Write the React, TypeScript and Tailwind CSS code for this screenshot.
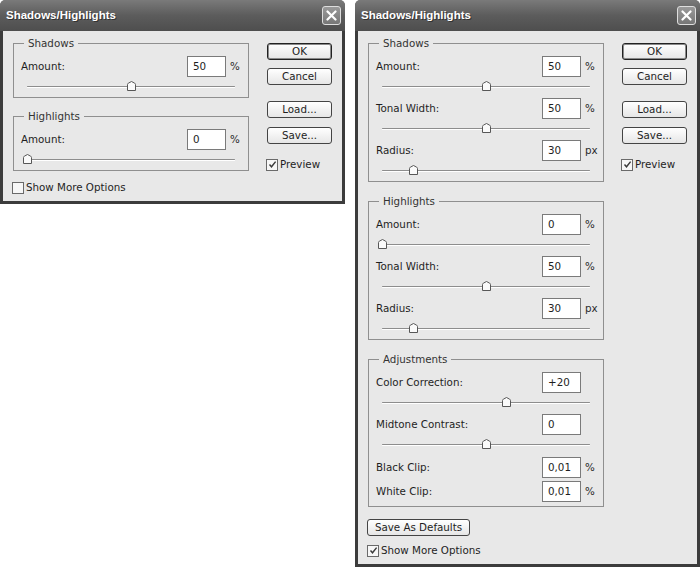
import React from 'react';

type RowDef = {
  label: string;
  value: string;
  unit?: string;
  slider?: number;
  gap?: string;
};

const CheckBox: React.FC<{ checked?: boolean }> = ({ checked }) => (
  <span className="flex h-[12px] w-[12px] shrink-0 items-center justify-center border border-[#6a6a6a] bg-[#f7f7f7]">
    {checked && (
      <svg width="9" height="9" viewBox="0 0 9 9">
        <path d="M1.5 4.5 L3.5 6.8 L7.6 1.6" fill="none" stroke="#3a3a3a" strokeWidth="1.4" />
      </svg>
    )}
  </span>
);

const Slider: React.FC<{ pos: number }> = ({ pos }) => (
  <div className="relative mx-[13px] mt-[2px] flex h-[14px] items-center">
    <div className="h-px w-full rounded-full bg-[#8d8d8d] shadow-[0_1px_0_#ffffff]" />
    <svg
      className="absolute top-[2px]"
      style={{ left: `calc(${pos}% - 4.5px)` }}
      width="9"
      height="10"
      viewBox="0 0 9 10"
    >
      <path d="M0.5 9.5 V3.6 Q0.5 2.8 1.3 2.2 L4.5 0.5 L7.7 2.2 Q8.5 2.8 8.5 3.6 V9.5 Z" fill="#fafafa" stroke="#575757" />
    </svg>
  </div>
);

const Row: React.FC<{ row: RowDef; first?: boolean }> = ({ row, first }) => (
  <div>
    <div className={`flex h-[21px] items-center pl-[7px] ${first ? 'mt-[6px]' : row.gap ?? 'mt-[5px]'}`}>
      <span className="flex-1 text-[#1e1e1e]">{row.label}</span>
      <div className="flex h-[21px] w-[39px] items-center border border-[#7a7a7a] bg-white pl-[5px] text-[#1e1e1e]">
        {row.value}
      </div>
      <span className="w-[22px] pl-[4px] text-[#2a2a2a]">{row.unit}</span>
    </div>
    {row.slider !== undefined && <Slider pos={row.slider} />}
  </div>
);

const Group: React.FC<{ title: string; rows: RowDef[]; className?: string }> = ({ title, rows, className }) => (
  <fieldset className={`w-[236px] border border-[#8f8f8f] pb-[4px] ${className ?? ''}`}>
    <legend className="ml-[10px] px-[4px] leading-[14px] text-[#333]">{title}</legend>
    {rows.map((r, i) => (
      <Row key={r.label} row={r} first={i === 0} />
    ))}
  </fieldset>
);

const Btn: React.FC<{ children: React.ReactNode; primary?: boolean; className?: string }> = ({ children, primary, className }) => (
  <button
    className={`flex h-[17px] w-[65px] items-center justify-center rounded-[3px] border bg-linear-to-b from-white to-[#e6e6e6] leading-none text-[#1e1e1e] ${
      primary ? 'border-[#222] shadow-[inset_0_0_0_1px_#8a8a8a]' : 'border-[#444]'
    } ${className ?? ''}`}
  >
    {children}
  </button>
);

const TitleBar: React.FC = () => (
  <div className="flex h-[31px] items-center justify-between rounded-t-[5px] bg-linear-to-b from-[#7a7a7a] via-[#5c5c5c] to-[#4e4e4e] pl-[6px] pr-[4px]">
    <span className="font-['Liberation_Sans',Arial,sans-serif] text-[11.5px] font-bold text-white [text-shadow:1px_1px_0_#333]">
      Shadows/Highlights
    </span>
    <div className="flex h-[19px] w-[19px] items-center justify-center rounded-[3px] border border-[#dedede] bg-linear-to-b from-[#9a9a9a] to-[#777]">
      <svg width="11" height="11" viewBox="0 0 11 11">
        <path d="M1.5 1.5 L9.5 9.5 M9.5 1.5 L1.5 9.5" stroke="#fff" strokeWidth="2.2" strokeLinecap="round" />
      </svg>
    </div>
  </div>
);

const ButtonColumn: React.FC = () => (
  <div className="ml-[18px] flex flex-col pt-[7px]">
    <Btn primary>OK</Btn>
    <Btn className="mt-[8px]">Cancel</Btn>
    <Btn className="mt-[16px]">Load...</Btn>
    <Btn className="mt-[9px]">Save...</Btn>
    <div className="-ml-px mt-[13px] flex items-center gap-[2px] text-[#1e1e1e]">
      <CheckBox checked />
      <span>Preview</span>
    </div>
  </div>
);

const Dialog: React.FC<{ children: React.ReactNode; className?: string }> = ({ children, className }) => (
  <div className={`flex w-[345px] flex-col rounded-t-[6px] bg-[#3c3c3c] ${className ?? ''}`}>
    <TitleBar />
    <div className="mx-[3px] mb-[3px] flex flex-1 bg-[#e8e8e8] pl-[10px] pt-[5px]">{children}</div>
  </div>
);

const shadowsFull: RowDef[] = [
  { label: 'Amount:', value: '50', unit: '%', slider: 50 },
  { label: 'Tonal Width:', value: '50', unit: '%', slider: 50 },
  { label: 'Radius:', value: '30', unit: 'px', slider: 15 },
];

const highlightsFull: RowDef[] = [
  { label: 'Amount:', value: '0', unit: '%', slider: 0 },
  { label: 'Tonal Width:', value: '50', unit: '%', slider: 50 },
  { label: 'Radius:', value: '30', unit: 'px', slider: 15 },
];

const adjustments: RowDef[] = [
  { label: 'Color Correction:', value: '+20', slider: 60 },
  { label: 'Midtone Contrast:', value: '0', slider: 50 },
  { label: 'Black Clip:', value: '0,01', unit: '%', gap: 'mt-[6px]' },
  { label: 'White Clip:', value: '0,01', unit: '%', gap: 'mt-[3px]' },
];

export default function App() {
  return (
    <div className="flex h-[567px] w-[700px] items-start gap-[10px] bg-white font-['DejaVu_Sans',sans-serif] text-[10.3px]">
      <Dialog className="h-[204px]">
        <div className="flex flex-col">
          <Group title="Shadows" rows={[{ label: 'Amount:', value: '50', unit: '%', slider: 50 }]} />
          <Group className="mt-[11px]" title="Highlights" rows={[{ label: 'Amount:', value: '0', unit: '%', slider: 0 }]} />
          <div className="-ml-px mt-[9px] flex items-center gap-[2px] text-[#1e1e1e]">
            <CheckBox />
            <span>Show More Options</span>
          </div>
        </div>
        <ButtonColumn />
      </Dialog>

      <Dialog className="h-[567px]">
        <div className="flex flex-col">
          <Group title="Shadows" rows={shadowsFull} />
          <Group className="mt-[12px]" title="Highlights" rows={highlightsFull} />
          <Group className="mt-[12px]" title="Adjustments" rows={adjustments} />
          <button className="-ml-px mt-[12px] flex h-[17px] w-[103px] items-center justify-center rounded-[3px] border border-[#444] bg-linear-to-b from-white to-[#e6e6e6] leading-none text-[#1e1e1e]">
            Save As Defaults
          </button>
          <div className="-ml-px mt-[7px] flex items-center gap-[2px] text-[#1e1e1e]">
            <CheckBox checked />
            <span>Show More Options</span>
          </div>
        </div>
        <ButtonColumn />
      </Dialog>
    </div>
  );
}
